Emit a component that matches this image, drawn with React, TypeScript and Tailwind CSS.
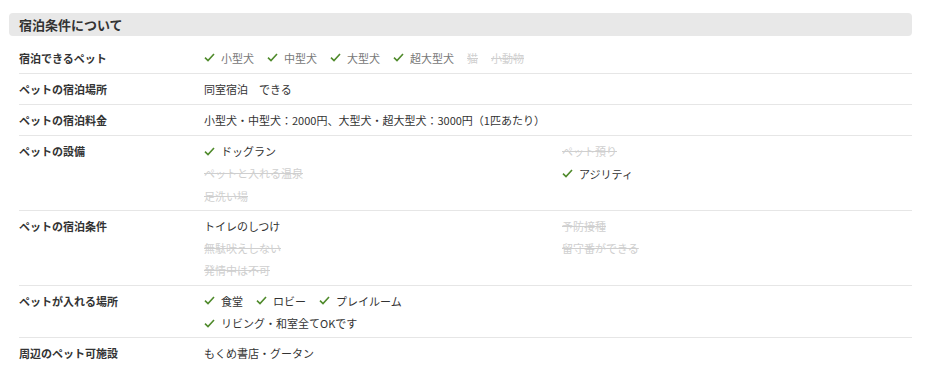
import * as React from "react"

type Item = { label: string; checked?: boolean; off?: boolean }

const Check = () => (
  <svg width="11" height="9" viewBox="0 0 11 9" className="mr-[6px] shrink-0">
    <path d="M1 4.6 L4 7.6 L10 1" fill="none" stroke="#4f8a2b" strokeWidth="1.6" />
  </svg>
)

function Tag({ item, muted }: { item: Item; muted?: boolean }) {
  if (item.off) {
    return <span className="text-[#cfcfcf] line-through decoration-[#cfcfcf]">{item.label}</span>
  }
  return (
    <span className={`inline-flex items-center ${muted ? "text-[#777]" : "text-[#333]"}`}>
      {item.checked && <Check />}
      {item.label}
    </span>
  )
}

function Row({ label, children, first, last }: { label: string; children: React.ReactNode; first?: boolean; last?: boolean }) {
  return (
    <div className={`flex py-[3px] ${last ? "" : "border-b border-[#e6e6e6]"} ${first ? "mt-[7px]" : ""}`}>
      <div className="w-[185px] shrink-0 font-bold leading-[24px] text-[#333]">{label}</div>
      <div className="flex-1 leading-[22.3px]">{children}</div>
    </div>
  )
}

const Grid = ({ items }: { items: Item[] }) => (
  <div className="grid grid-cols-[358px_1fr] pt-[1px]">
    {items.map((it) => (
      <div key={it.label} className="h-[22.3px]">
        <Tag item={it} />
      </div>
    ))}
  </div>
)

export default function App() {
  const pets: Item[] = [
    { label: "小型犬", checked: true },
    { label: "中型犬", checked: true },
    { label: "大型犬", checked: true },
    { label: "超大型犬", checked: true },
    { label: "猫", off: true },
    { label: "小動物", off: true },
  ]

  const facilities: Item[] = [
    { label: "ドッグラン", checked: true },
    { label: "ペット預り", off: true },
    { label: "ペットと入れる温泉", off: true },
    { label: "アジリティ", checked: true },
    { label: "足洗い場", off: true },
  ]

  const conditions: Item[] = [
    { label: "トイレのしつけ" },
    { label: "予防接種", off: true },
    { label: "無駄吠えしない", off: true },
    { label: "留守番ができる", off: true },
    { label: "発情中は不可", off: true },
  ]

  return (
    <div className="min-h-[377px] bg-white pt-[13px] pl-[9px] text-[11px] text-[#333] [font-family:'Noto_Sans_CJK_JP','Noto_Sans',sans-serif]">
      <div className="w-[903px]">
        <div className="flex h-[23px] items-center rounded-[4px] bg-[#e8e8e8] pl-[10px] text-[13px] font-bold text-[#333]">
          宿泊条件について
        </div>
        <div className="ml-[10px]">
          <Row label="宿泊できるペット" first>
            <div className="flex h-[24px] items-center gap-x-[13px]">
              {pets.map((p) => (
                <Tag key={p.label} item={p} muted />
              ))}
            </div>
          </Row>
          <Row label="ペットの宿泊場所">
            <div className="leading-[24px]">同室宿泊　できる</div>
          </Row>
          <Row label="ペットの宿泊料金">
            <div className="leading-[24px]">小型犬・中型犬：2000円、大型犬・超大型犬：3000円（1匹あたり）</div>
          </Row>
          <Row label="ペットの設備">
            <Grid items={facilities} />
          </Row>
          <Row label="ペットの宿泊条件">
            <Grid items={conditions} />
          </Row>
          <Row label="ペットが入れる場所">
            <div className="pt-[1px]">
              <div className="flex h-[22.3px] gap-x-[13px]">
                <Tag item={{ label: "食堂", checked: true }} />
                <Tag item={{ label: "ロビー", checked: true }} />
                <Tag item={{ label: "プレイルーム", checked: true }} />
              </div>
              <div className="h-[22.3px]">
                <Tag item={{ label: "リビング・和室全てOKです", checked: true }} />
              </div>
            </div>
          </Row>
          <Row label="周辺のペット可施設" last>
            <div className="leading-[24px]">もくめ書店・グータン</div>
          </Row>
        </div>
      </div>
    </div>
  )
}
